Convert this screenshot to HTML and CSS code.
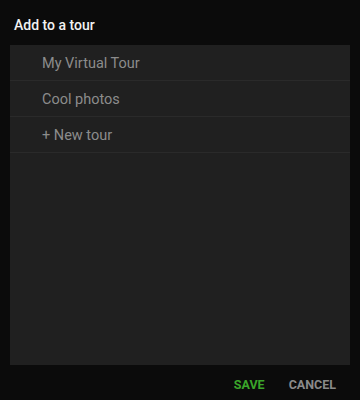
FILE: index.html
```html
<!DOCTYPE html>
<html lang="en">
<head>
	<meta charset="UTF-8">
	<title>Add to a tour</title>
	<link rel="stylesheet" href="styles.css">
</head>
<body>
<div class="dialog">
	<div class="dialog-title">Add to a tour</div>
	<div class="tour-list">
		<div class="tour-item">My Virtual Tour</div>
		<div class="tour-item">Cool photos</div>
		<div class="tour-item">+ New tour</div>
	</div>
	<div class="dialog-actions">
		<button class="btn btn-save">SAVE</button>
		<button class="btn btn-cancel">CANCEL</button>
	</div>
</div>
</body>
</html>
```

FILE: styles.css
```css
html, body {
	margin: 0;
	background: #0b0b0b;
}
body {
	font-family: Roboto, "Liberation Sans", sans-serif;
	width: 360px;
	height: 400px;
	overflow: hidden
}
.dialog {
	display: flex;
	flex-direction: column;
	height: 400px
}
.dialog-title {
	flex-shrink: 0;
	height: 45px;
	line-height: 50px;
	padding-left: 14px;
	color: #f2f2f2;
	font-size: 14px;
	font-weight: 500;
	box-sizing: border-box
}
.tour-list {
	flex-shrink: 0;
	margin: 0 10px;
	height: 320px;
	background: #202020
}
.tour-item {
	height: 35px;
	line-height: 37px;
	padding-left: 32px;
	font-size: 14.5px;
	color: #8c8c8c;
	border-bottom: 1px solid #2a2a2a
}
.dialog-actions {
	display: flex;
	justify-content: flex-end;
	align-items: center;
	height: 35px;
	padding: 3px 16px 0 0;
	gap: 8px;
	box-sizing: border-box
}
.btn {
	background: none;
	border: none;
	font-family: Roboto, "Liberation Sans", sans-serif;
	font-weight: bold;
	font-size: 12.5px;
	padding: 4px 8px;
	cursor: pointer
}
.btn-save {
	color: #3aa52a
}
.btn-cancel {
	color: #8a8a8a
}
```
